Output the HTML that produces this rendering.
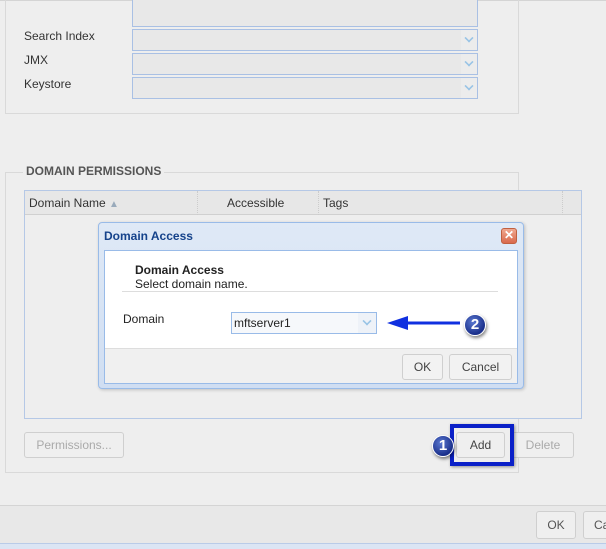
<!DOCTYPE html>
<html><head><style>
*{box-sizing:border-box;margin:0;padding:0}
body{width:606px;height:549px;background:#eeeeee;font-family:"Liberation Sans",sans-serif;font-size:12px;color:#333;position:relative;overflow:hidden}
.a{position:absolute}
.fld{position:absolute;left:132px;width:346px;height:22px;border:1px solid #a9c0e4;background:#e8e8e8}
.fld:after{content:"";position:absolute;right:0;top:0;width:16px;height:20px;background:#ececec}
.chev{position:absolute;right:4px;top:4px;width:8px;height:8px;border-right:2px solid #99c4e6;border-bottom:2px solid #99c4e6;transform:rotate(45deg) scale(.8);z-index:2}
.lbl{position:absolute;left:24px;font-size:12px;color:#333}
.btn{position:absolute;border:1px solid #cfcfcf;border-radius:3px;background:#efefef;text-align:center;font-size:12px}
.badge{position:absolute;width:22px;height:22px;border-radius:50%;background:radial-gradient(circle at 40% 35%,#5a78d0,#1a2f8a 70%);border:1.5px solid #fff;box-shadow:1px 2px 3px rgba(0,0,0,.5);color:#fff;font-weight:bold;font-size:15px;text-align:center;line-height:19px}
</style></head><body>
<div class="a" style="left:0;top:0;width:606px;height:1px;background:#d4d4d4"></div>
<div class="a" style="left:5px;top:-5px;width:514px;height:119px;border:1px solid #d9d9d9"></div>
<div class="a" style="left:132px;top:0;width:346px;height:27px;border:1px solid #a9c0e4;border-top:none;background:#e8e8e8"></div>
<div class="lbl" style="top:29px">Search Index</div>
<div class="fld" style="top:29px"><div class="chev"></div></div>
<div class="lbl" style="top:53px">JMX</div>
<div class="fld" style="top:53px"><div class="chev"></div></div>
<div class="lbl" style="top:77px">Keystore</div>
<div class="fld" style="top:77px"><div class="chev"></div></div>

<div class="a" style="left:5px;top:172px;width:514px;height:301px;border:1px solid #d9d9d9"></div>
<div class="a" style="left:23px;top:164px;padding:0 3px;background:#eee;font-weight:bold;color:#555;font-size:12px">DOMAIN PERMISSIONS</div>
<div class="a" style="left:24px;top:190px;width:558px;height:229px;border:1px solid #b5c8e6;background:#eeeeee"></div>
<div class="a" style="left:25px;top:191px;width:556px;height:24px;background:#e7e7e7;border-bottom:1px solid #d0d0d0"></div>
<div class="a" style="left:197px;top:191px;height:24px;border-left:1px dotted #ccc"></div>
<div class="a" style="left:318px;top:191px;height:24px;border-left:1px dotted #ccc"></div>
<div class="a" style="left:562px;top:191px;height:24px;border-left:1px dotted #ccc"></div>
<div class="a" style="left:29px;top:196px">Domain Name <span style="color:#9ab;font-size:10px">▲</span></div>
<div class="a" style="left:227px;top:196px">Accessible</div>
<div class="a" style="left:323px;top:196px">Tags</div>

<div class="btn" style="left:24px;top:432px;width:100px;height:26px;line-height:24px;color:#aaa">Permissions...</div>
<div class="btn" style="left:456px;top:432px;width:49px;height:26px;line-height:24px;color:#444">Add</div>
<div class="btn" style="left:512px;top:432px;width:62px;height:26px;line-height:24px;color:#aaa">Delete</div>
<div class="a" style="left:450px;top:424px;width:64px;height:42px;border:4px solid #0a20c8;box-shadow:1px 1px 3px rgba(0,0,0,.4)"></div>
<div class="badge" style="left:432px;top:435px">1</div>

<div class="a" style="left:0;top:505px;width:606px;height:39px;background:#e8e8e8;border-top:1px solid #d4d4d4"></div>
<div class="btn" style="left:536px;top:511px;width:40px;height:28px;line-height:26px;color:#555">OK</div>
<div class="btn" style="left:583px;top:511px;width:40px;height:28px;line-height:26px;color:#555;text-align:left;padding-left:10px">Cancel</div>
<div class="a" style="left:0;top:543px;width:606px;height:6px;background:#dbe5f4;border-top:1px solid #b9cbe8"></div>

<div class="a" style="left:98px;top:222px;width:426px;height:167px;border:1px solid #99bbe8;border-radius:4px;background:linear-gradient(#dfe9f6,#d0def2);box-shadow:1px 1px 3px rgba(0,0,0,.2)"></div>
<div class="a" style="left:104px;top:229px;font-weight:bold;color:#15428b;font-size:12px">Domain Access</div>
<div class="a" style="left:501px;top:228px;width:16px;height:16px;border-radius:3px;background:linear-gradient(#f0a890,#d9694c);border:1px solid #c06040;color:#fff;font-size:12px;line-height:13px;text-align:center;font-weight:bold">✕</div>
<div class="a" style="left:104px;top:250px;width:414px;height:134px;border:1px solid #99bbe8;background:#fff"></div>
<div class="a" style="left:105px;top:348px;width:412px;height:35px;background:#f0f0f0;border-top:1px solid #ddd"></div>
<div class="a" style="left:135px;top:263px;font-weight:bold;color:#222">Domain Access</div>
<div class="a" style="left:135px;top:277px;color:#222">Select domain name.</div>
<div class="a" style="left:122px;top:291px;width:376px;height:1px;background:#ddd"></div>
<div class="a" style="left:123px;top:312px;color:#222">Domain</div>
<div class="a" style="left:231px;top:312px;width:146px;height:22px;border:1px solid #99bbe8;background:#f6f8fb;padding:3px 2px;color:#222">mftserver1<div style="position:absolute;right:0;top:0;width:18px;height:20px;background:#eef2f8"></div><div class="chev" style="right:5px;top:4px"></div></div>
<div class="btn" style="left:402px;top:354px;width:41px;height:26px;line-height:24px;color:#444;background:#f2f2f2">OK</div>
<div class="btn" style="left:449px;top:354px;width:63px;height:26px;line-height:24px;color:#444;background:#f2f2f2">Cancel</div>
<svg class="a" style="left:385px;top:314px" width="80" height="20"><path d="M22 9 H75" stroke="#1030e0" stroke-width="3"/><path d="M2 9 L23 2 L23 16 Z" fill="#1030e0"/></svg>
<div class="badge" style="left:464px;top:314px">2</div>
</body></html>
